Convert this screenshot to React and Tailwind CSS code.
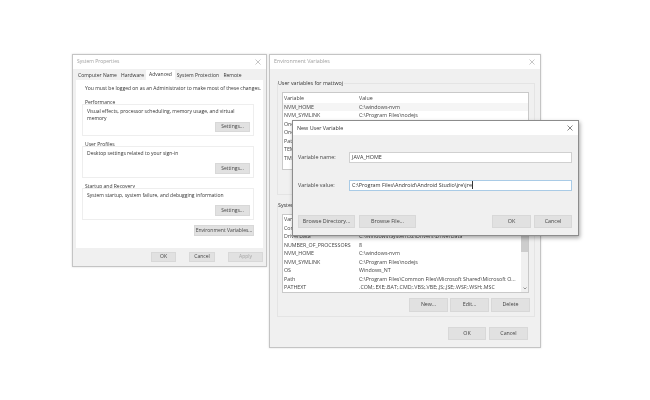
const Btn = ({ className = '', children }) => (
  <div className={`flex items-center justify-center whitespace-nowrap bg-[#e1e1e1] border border-[#d8d8d8] text-[#444] ${className}`}>{children}</div>
)

const TitleBar = ({ title, className = 'text-[#a0a0a0]' }) => (
  <div className={`flex items-center justify-between h-[14px] bg-white pl-[4px] pr-[5px] shrink-0 whitespace-nowrap ${className}`}>
    <span>{title}</span>
    <svg width="6" height="6" viewBox="0 0 6 6" stroke="currentColor" strokeWidth="0.6"><path d="M0.5 0.5 5.5 5.5M5.5 0.5 0.5 5.5" /></svg>
  </div>
)

const Group = ({ label, text, className = '' }) => (
  <div className={`flex flex-col ${className}`}>
    <div className="h-[4px] leading-[4px] pl-[3px] whitespace-nowrap">{label}</div>
    <div className="flex flex-col border border-[#eeeeee] h-[32px] pt-[3px] pl-[4px] pr-[3px] pb-[3px]">
      <div className="leading-[7px] grow w-[150px]">{text}</div>
      <Btn className="w-[35px] h-[11px] self-end">Settings...</Btn>
    </div>
  </div>
)

const TABS = [
  ['Computer Name', 'w-[43px]'],
  ['Hardware', 'w-[27px]'],
  ['Advanced', 'w-[29px]'],
  ['System Protection', 'w-[46px]'],
  ['Remote', 'w-[23px]'],
]

const SystemProperties = () => (
  <div className="absolute left-[72px] top-[54px] w-[195px] h-[213px] flex flex-col bg-[#f0f0f0] border border-[#c4c4c4] shadow-[0_0_2px_rgba(0,0,0,0.15)]">
    <TitleBar title="System Properties" />
    <div className="flex h-[11px] items-end pl-[3px] shrink-0">
      {TABS.map(([t, w]) => (
        <div key={t} className={`${w} text-center whitespace-nowrap ${t === 'Advanced' ? 'h-[10px] pt-[1px] bg-white leading-[7px]' : 'h-[8px] leading-[7px]'}`}>{t}</div>
      ))}
    </div>
    <div className="mx-[3px] bg-white h-[168px] pl-[6px] pr-[9px] pt-[5px] flex flex-col shrink-0">
      <div className="leading-[7px] pl-[3px] mb-[8px] whitespace-nowrap">You must be logged on as an Administrator to make most of these changes.</div>
      <Group label="Performance" text="Visual effects, processor scheduling, memory usage, and virtual memory" className="mb-[6px]" />
      <Group label="User Profiles" text="Desktop settings related to your sign-in" className="mb-[6px]" />
      <Group label="Startup and Recovery" text="System startup, system failure, and debugging information" className="mb-[5px]" />
      <Btn className="w-[60px] h-[11px] self-end">Environment Variables...</Btn>
    </div>
    <div className="flex justify-end gap-[13px] pr-[3px] pt-[4px]">
      <Btn className="w-[25px] h-[10px]">OK</Btn>
      <Btn className="w-[26px] h-[10px]">Cancel</Btn>
      <Btn className="w-[35px] h-[10px] text-[#a5a5a5]">Apply</Btn>
    </div>
  </div>
)

const USER_VARS = [
  ['Variable', 'Value'],
  ['NVM_HOME', 'C:\\windows-nvm'],
  ['NVM_SYMLINK', 'C:\\Program Files\\nodejs'],
  ['OneDrive', 'C:\\Users\\mattwoj\\OneDrive'],
  ['OneDriveConsumer', 'C:\\Users\\mattwoj\\OneDrive'],
  ['Path', 'C:\\Users\\mattwoj\\AppData\\Local\\Microsoft'],
  ['TEMP', 'C:\\Users\\mattwoj\\AppData\\Local\\Temp'],
  ['TMP', 'C:\\Users\\mattwoj\\AppData\\Local\\Temp'],
]

const SYS_VARS = [
  ['Variable', 'Value'],
  ['ComSpec', 'C:\\Windows\\system32\\cmd.exe'],
  ['DriverData', 'C:\\Windows\\System32\\Drivers\\DriverData'],
  ['NUMBER_OF_PROCESSORS', '8'],
  ['NVM_HOME', 'C:\\windows-nvm'],
  ['NVM_SYMLINK', 'C:\\Program Files\\nodejs'],
  ['OS', 'Windows_NT'],
  ['Path', 'C:\\Program Files\\Common Files\\Microsoft Shared\\Microsoft O...'],
  ['PATHEXT', '.COM;.EXE;.BAT;.CMD;.VBS;.VBE;.JS;.JSE;.WSF;.WSH;.MSC'],
]

const VarRows = ({ rows, highlight }) => rows.map(([name, value]) => (
  <div key={name} className={`flex h-[8.5px] leading-[8.5px] pl-[1px] whitespace-nowrap text-[#444] ${name === highlight ? 'bg-[#f5f5f5]' : ''}`}>
    <span className="w-[75px] shrink-0">{name}</span>
    <span>{value}</span>
  </div>
))

const VarGroup = ({ label, children, className = '' }) => (
  <div className={`mx-[7px] w-[258px] h-[112px] border border-[#e4e4e4] shrink-0 ${className}`}>
    <div className="-mt-[4px] h-[7px] leading-[7px] w-fit pr-[1px] bg-[#f0f0f0] whitespace-nowrap mb-[5px]">{label}</div>
    {children}
  </div>
)

const EnvironmentVariables = () => (
  <div className="absolute left-[269px] top-[54px] w-[272px] h-[294px] flex flex-col bg-[#f0f0f0] border border-[#c4c4c4] shadow-[0_0_2px_rgba(0,0,0,0.15)] text-[5.3px]">
    <TitleBar title="Environment Variables" />
    <VarGroup label="User variables for mattwoj" className="mt-[14px]">
      <div className="ml-[4px] w-[247px] h-[78px] bg-white border border-[#c9c9c9] pt-[1px]">
        <VarRows rows={USER_VARS} highlight="NVM_HOME" />
      </div>
    </VarGroup>
    <VarGroup label="System variables" className="mt-[10px]">
      <div className="ml-[4px] w-[247px] h-[79px] bg-white border border-[#c9c9c9] flex">
        <div className="grow"><VarRows rows={SYS_VARS} /></div>
        <div className="w-[7px] bg-[#f0f0f0] flex flex-col justify-between items-center shrink-0">
          <div className="w-full h-[37px] bg-[#cdcdcd]" />
          <svg className="mb-[2px]" width="4" height="3" viewBox="0 0 4 3" fill="none" stroke="#555" strokeWidth="0.6"><path d="M0.5 0.5 2 2 3.5 0.5" /></svg>
        </div>
      </div>
      <div className="flex justify-end gap-[2px] pr-[4px] pt-[5px]">
        <Btn className="w-[39px] h-[14px]">New...</Btn>
        <Btn className="w-[39px] h-[14px]">Edit...</Btn>
        <Btn className="w-[39px] h-[14px]">Delete</Btn>
      </div>
    </VarGroup>
    <div className="flex justify-end gap-[3px] pr-[12px] pt-[10px] shrink-0">
      <Btn className="w-[38px] h-[13px]">OK</Btn>
      <Btn className="w-[39px] h-[13px]">Cancel</Btn>
    </div>
  </div>
)

const Field = ({ label, value, active, className = '' }) => (
  <div className={`flex items-center h-[11px] ${className}`}>
    <span className="w-[51px] shrink-0 text-[#444] whitespace-nowrap">{label}</span>
    <div className={`w-[223px] h-[11px] bg-white border pl-[2px] leading-[9px] whitespace-nowrap ${active ? 'border-[#a9cbe6]' : 'border-[#d0d0d0]'}`}>
      {value}{active && <span className="border-r border-[#333]" />}
    </div>
  </div>
)

const NewUserVariable = () => (
  <div className="absolute left-[292px] top-[120px] w-[287px] h-[116px] flex flex-col bg-[#f0f0f0] border border-[#8c8c8c] shadow-[1px_2px_4px_rgba(0,0,0,0.35)] text-[5.4px]">
    <TitleBar title="New User Variable" className="text-[#333]" />
    <div className="flex flex-col pl-[5px] pt-[17px]">
      <Field label="Variable name:" value="JAVA_HOME" className="mb-[17px]" />
      <Field label="Variable value:" value="C:\Program Files\Android\Android Studio\jre\jre" active />
      <div className="flex pt-[24px] pr-[6px]">
        <Btn className="w-[57px] h-[13px] mr-[4px]">Browse Directory...</Btn>
        <Btn className="w-[57px] h-[13px]">Browse File...</Btn>
        <Btn className="w-[39px] h-[13px] ml-auto border-[#6fa8d6]">OK</Btn>
        <Btn className="w-[38px] h-[13px] ml-[3px]">Cancel</Btn>
      </div>
    </div>
  </div>
)

export default function App() {
  return (
    <div className="relative w-[650px] h-[400px] overflow-hidden bg-white text-[#333] text-[5px] blur-[0.3px] font-['Open_Sans','Noto_Sans',sans-serif]">
      <SystemProperties />
      <EnvironmentVariables />
      <NewUserVariable />
    </div>
  )
}
